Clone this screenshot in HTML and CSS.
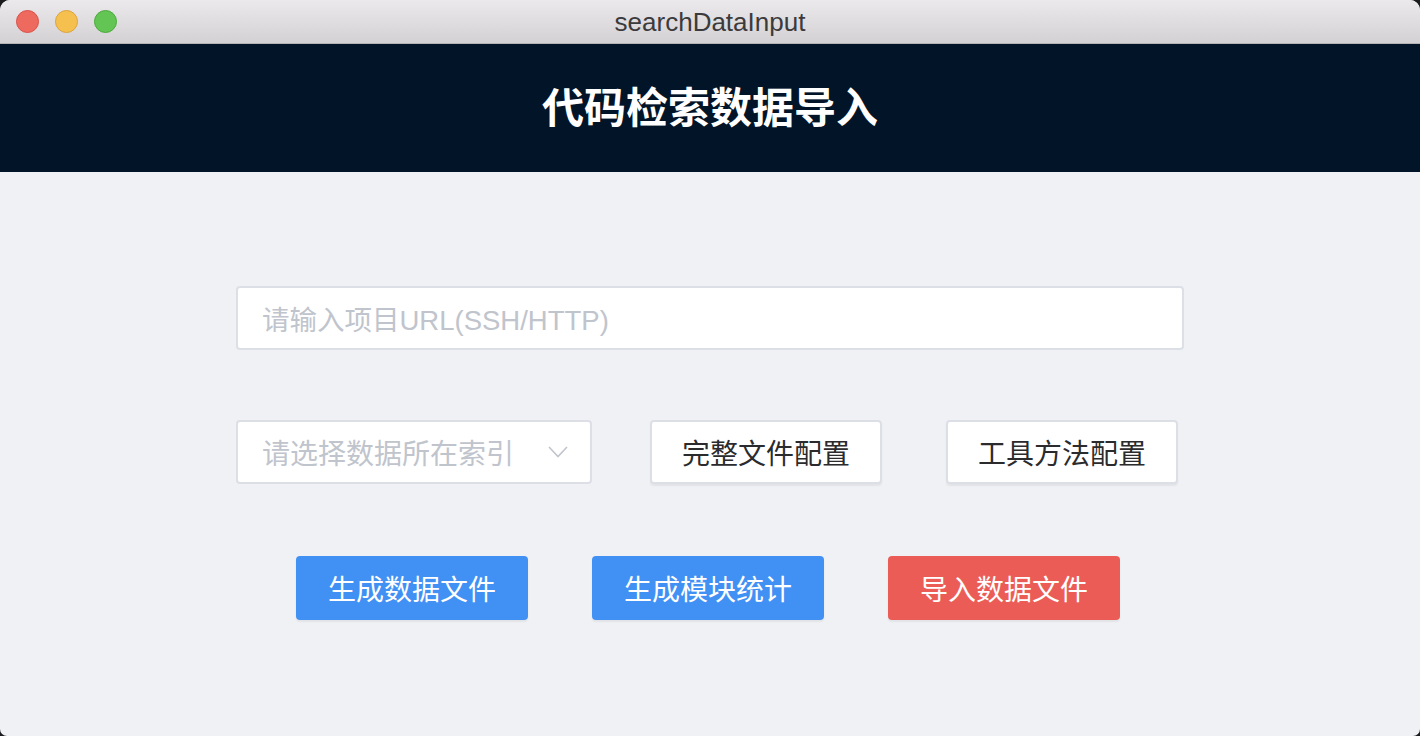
FILE: index.html
```html
<!DOCTYPE html>
<html lang="zh-CN">
<head>
<meta charset="utf-8">
<title>searchDataInput</title>
<link rel="stylesheet" href="styles.css">
</head>
<body>
<div class="window">
  <div class="titlebar">
    <div class="lights">
      <span class="light red"></span>
      <span class="light yellow"></span>
      <span class="light green"></span>
    </div>
    <div class="wtitle">searchDataInput</div>
  </div>
  <header class="header">
    <h1 class="h-title">代码检索数据导入</h1>
  </header>
  <main class="content">
    <div class="form">
      <div class="url-input">请输入项目URL(SSH/HTTP)</div>
      <div class="row row-config">
        <div class="select">
          <span class="select-ph">请选择数据所在索引</span>
          <svg class="chev" width="20" height="12" viewBox="0 0 20 12"><path d="M1 1 L10 10.5 L19 1" fill="none" stroke="#c0c4cc" stroke-width="1.6"/></svg>
        </div>
        <div class="btn btn-plain btn-a">完整文件配置</div>
        <div class="btn btn-plain btn-b">工具方法配置</div>
      </div>
    </div>
    <div class="row row-actions">
      <div class="btn btn-primary">生成数据文件</div>
      <div class="btn btn-primary">生成模块统计</div>
      <div class="btn btn-danger">导入数据文件</div>
    </div>
  </main>
</div>
</body>
</html>
```
FILE: styles.css
```css
html, body {
  margin: 0;
  padding: 0;
  background: #1b1b1d;
}
body {
  width: 1420px;
  height: 736px;
  overflow: hidden;
  font-family: "Noto Sans CJK SC", "Liberation Sans", sans-serif;
}
.window {
  width: 1420px;
  height: 736px;
  display: flex;
  flex-direction: column;
  border-radius: 10px 10px 7px 7px;
  overflow: hidden;
  background: #f0f1f5;
}
.titlebar {
  height: 43px;
  flex: none;
  position: relative;
  background: linear-gradient(#ebe9eb, #d3d1d3);
  border-bottom: 1px solid #b4b3b5;
  display: flex;
  align-items: center;
  justify-content: center;
}
.lights {
  position: absolute;
  left: 16px;
  top: 10px;
  display: flex;
  gap: 16px;
}
.light {
  width: 23px;
  height: 23px;
  border-radius: 50%;
  box-sizing: border-box;
}
.red { background: #ee6a5f; border: 1px solid #d8514a; }
.yellow { background: #f6c04f; border: 1px solid #dba33a; }
.green { background: #62c554; border: 1px solid #4ea83f; }
.wtitle {
  font-family: "Liberation Sans", "Noto Sans", sans-serif;
  font-size: 26px;
  color: #3b3a3c;
  margin-top: 2px;
}
.header {
  height: 128px;
  flex: none;
  background: #021427;
  display: flex;
  align-items: center;
  justify-content: center;
}
.h-title {
  margin: 0;
  color: #ffffff;
  font-size: 42px;
  font-weight: 700;
  line-height: 1;
  margin-top: -6px;
}
.content {
  flex: 1;
  display: flex;
  flex-direction: column;
  align-items: center;
  padding-top: 114px;
}
.form {
  width: 948px;
  display: flex;
  flex-direction: column;
}
.url-input {
  height: 64px;
  box-sizing: border-box;
  border: 2px solid #dcdfe6;
  border-radius: 4px;
  background: #fff;
  padding-left: 24px;
  display: flex;
  align-items: center;
  font-size: 27.5px;
  color: #c0c4cc;
  font-family: "Liberation Sans", "Noto Sans CJK SC", sans-serif;
}
.row {
  display: flex;
}
.row-config {
  margin-top: 70px;
}
.select {
  width: 356px;
  height: 64px;
  box-sizing: border-box;
  border: 2px solid #dcdfe6;
  border-radius: 4px;
  background: #fff;
  padding: 0 22px 0 24px;
  display: flex;
  align-items: center;
  justify-content: space-between;
}
.select-ph {
  font-size: 28px;
  color: #c0c4cc;
}
.btn {
  width: 232px;
  height: 64px;
  box-sizing: border-box;
  border-radius: 4px;
  display: flex;
  align-items: center;
  justify-content: center;
  font-size: 28px;
  box-shadow: 0 2px 2px rgba(0, 0, 0, 0.06);
}
.btn-plain {
  background: #fff;
  border: 2px solid #dcdfe6;
  color: #2b2b2d;
}
.btn-a { margin-left: 58px; }
.btn-b { margin-left: 64px; }
.row-actions {
  margin-top: 72px;
  gap: 64px;
  margin-left: -4px;
}
.btn-primary {
  background: #4191f5;
  color: #fff;
}
.btn-danger {
  background: #ec5c57;
  color: #fff;
}
```
